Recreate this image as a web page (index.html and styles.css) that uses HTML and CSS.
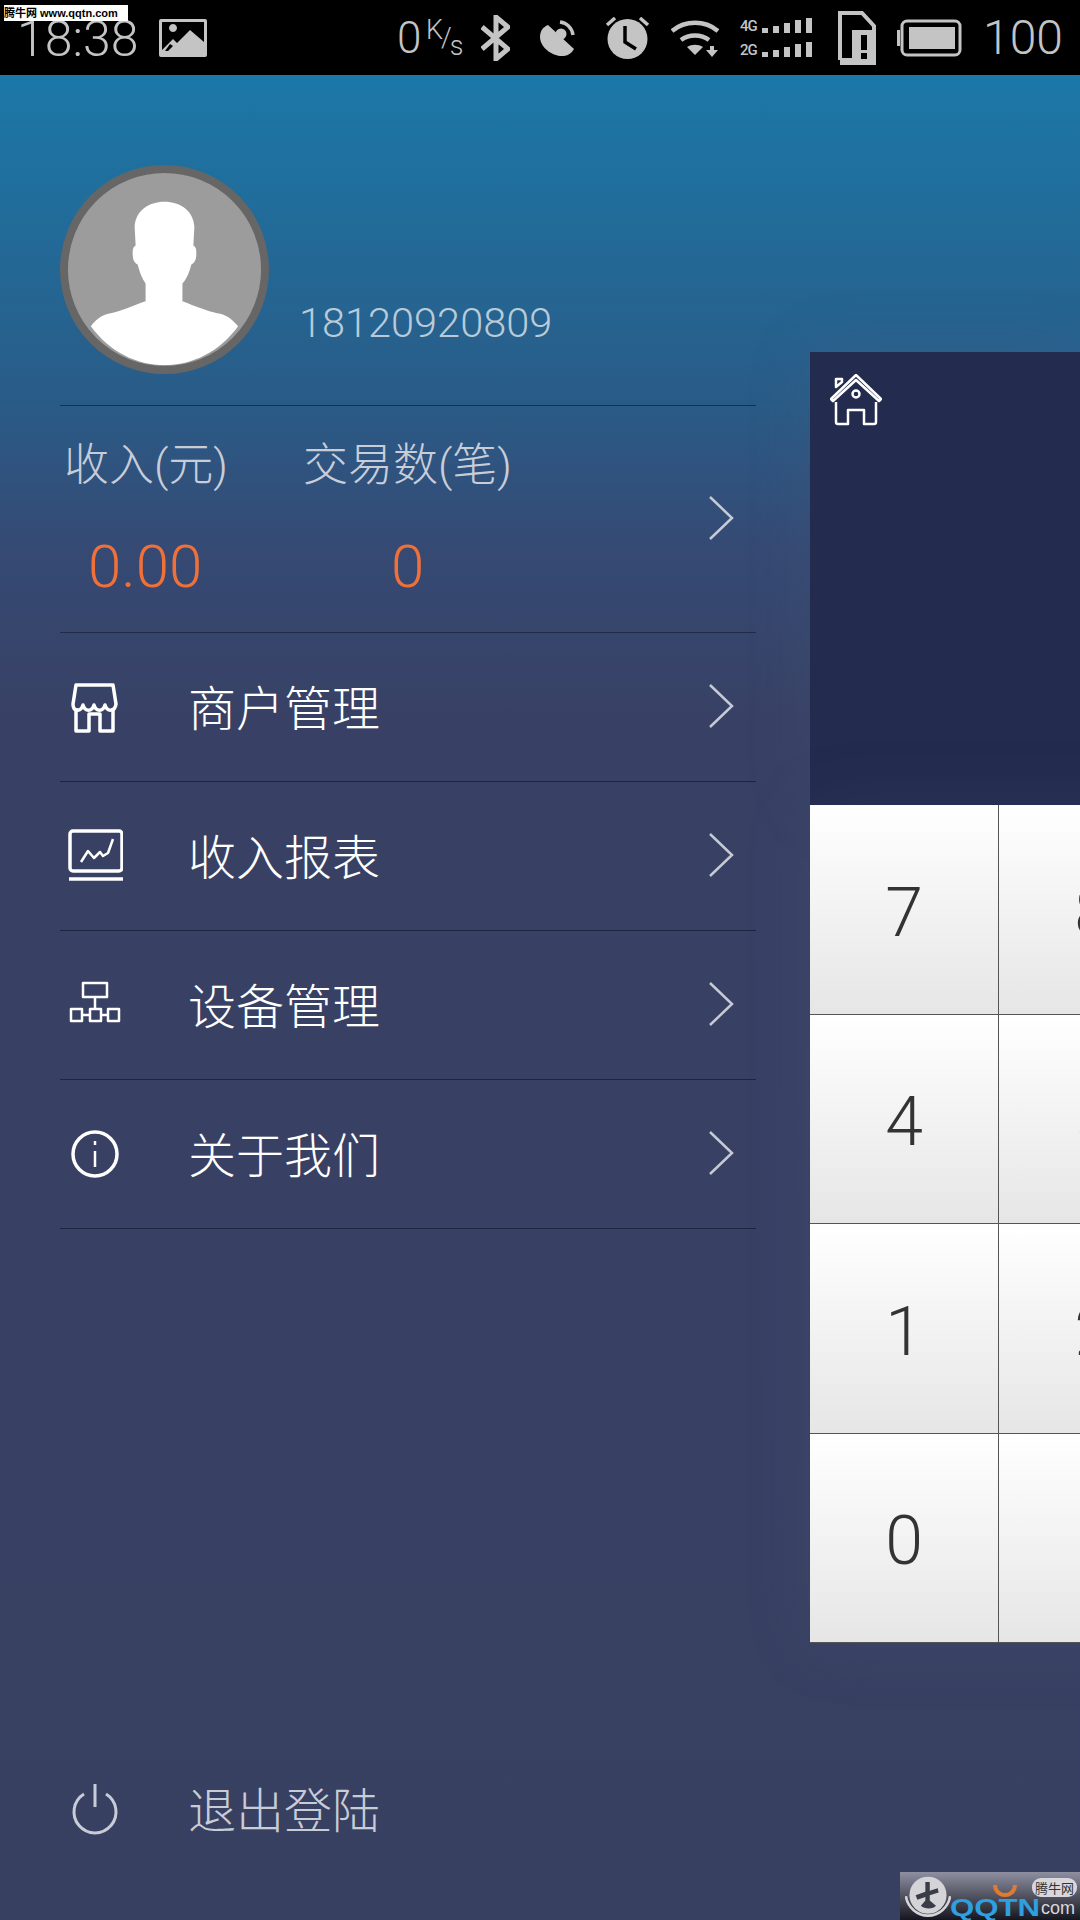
FILE: index.html
```html
<!DOCTYPE html>
<html lang="en">
<head>
    <meta charset="UTF-8">
    <meta name="viewport" content="width=device-width, initial-scale=1.0">
    <title>Drawer</title>
    <link rel="stylesheet" href="styles.css">
</head>
<body>
    <div class="watermark">腾牛网 www.qqtn.com</div>

    <div class="statusbar">
        <span class="time">18:38</span>
        <svg class="st-image" width="48" height="38" viewBox="0 0 48 38"><path fill="#c4c4c4" fill-rule="evenodd" d="M2 0h44a2 2 0 0 1 2 2v34a2 2 0 0 1-2 2H2a2 2 0 0 1-2-2V2a2 2 0 0 1 2-2zM3 3v28l11-11 4 4 13-13 14 12V3zM14 5a4 4 0 1 0 .01 0zM9 32l5-5-3-2-5 7z"/></svg>
        <span class="speed">0</span>
        <span class="speed-unit"><span class="unit-k">K</span><span class="unit-slash">/</span><span class="unit-s">s</span></span>
        <svg class="st-bt" width="29" height="46" viewBox="0 0 29 46"><path fill="none" stroke="#c4c4c4" stroke-width="5" d="M1 12l26 22-12 10V2l12 10L1 34"/></svg>
        <svg class="st-sat" width="35" height="38" viewBox="0 0 35 38"><path fill="#c4c4c4" d="M8 6l26 24a14 14 0 0 1-10 7C12 38 0 28 0 18 0 12 3 8 8 6z"/><path fill="none" stroke="#c4c4c4" stroke-width="3.5" d="M20 3c7 1 12 6 13 13"/><circle cx="21" cy="15" r="5.5" fill="#c4c4c4"/></svg>
        <svg class="st-alarm" width="45" height="42" viewBox="0 0 45 42"><circle cx="22.5" cy="22" r="20" fill="#c4c4c4"/><path fill="none" stroke="#000" stroke-width="3.5" d="M20 9v16l11 7"/><path fill="none" stroke="#c4c4c4" stroke-width="3.5" d="M2 8l8-7M43 8l-8-7"/></svg>
        <svg class="st-wifi" width="48" height="38" viewBox="0 0 48 38"><path fill="none" stroke="#c4c4c4" stroke-width="4.5" d="M1 12c13-11 33-11 46 0M10 21c8-6 20-6 28 0"/><path fill="#c4c4c4" d="M16 28c5-3 11-3 16 0l-8 8z"/><path fill="#c4c4c4" d="M39 27h4v4h4l-6 7-6-7h4z"/></svg>
        <div class="signal">
            <div class="signal-row"><span>4G</span><svg width="52" height="15" viewBox="0 0 52 15"><path fill="#c4c4c4" d="M0 10h6v5H0zM11 8h6v7h-6zM22 5h6v10h-6zM33 2h6v13h-6zM44 0h6v15h-6z"/></svg></div>
            <div class="signal-row"><span>2G</span><svg width="52" height="15" viewBox="0 0 52 15"><path fill="#c4c4c4" d="M0 10h6v5H0zM11 8h6v7h-6zM22 5h6v10h-6zM33 2h6v13h-6zM44 0h6v15h-6z"/></svg></div>
        </div>
        <svg class="st-sim" width="38" height="54" viewBox="0 0 38 54"><path fill="none" stroke="#c4c4c4" stroke-width="4" d="M2 49V2h22l12 13v15"/><path fill="#c4c4c4" fill-rule="evenodd" d="M2 47h12V19h24v35H2zM23 24v15h6V24zM23 42v6h6v-6z"/></svg>
        <svg class="st-batt" width="65" height="38" viewBox="0 0 65 38"><path fill="#c4c4c4" d="M0 11h3v16H0z"/><rect x="5" y="2" width="58" height="34" rx="5" fill="none" stroke="#c4c4c4" stroke-width="3"/><path fill="#c4c4c4" d="M12 8h46v22H12z"/></svg>
        <span class="level">100</span>
    </div>

    <div class="app">
        <div class="drawer">
            <div class="profile">
                <svg class="avatar" width="209" height="209" viewBox="0 0 210 210">
                    <circle cx="105" cy="105" r="101" fill="#9c9c9c" stroke="#666" stroke-width="8"/>
                    <path fill="#fff" d="M31 162C38 153 44 150 51 149C62 147 74 141 86 137V119C82 114 80 107 78 100C74 98 73 94 73 88C73 84 74 82 76 81L75 62C76 46 89 37 105 37C121 37 134 46 135 62L134 81C136 82 137 84 137 88C137 94 136 98 132 100C130 107 128 114 123 119V137C136 142 148 147 158 149C166 150 172 154 179 162C160 188 133 201 105 201C77 201 50 188 31 162Z"/>
                </svg>
                <span class="phone">18120920809</span>
            </div>
            <div class="stats">
                <div class="stat-col stat-income">
                    <span class="stat-label">收入(元)</span>
                    <span class="stat-value">0.00</span>
                </div>
                <div class="stat-col stat-count">
                    <span class="stat-label">交易数(笔)</span>
                    <span class="stat-value">0</span>
                </div>
                <svg class="chevron" width="26" height="44" viewBox="0 0 26 44"><path d="M2 1l22 21L2 43"/></svg>
            </div>
            <div class="menu-row">
                <svg class="menu-icon" width="56" height="56" viewBox="0 0 56 56"><path d="M9 6h37l3 19c-1 8-9 8-11 1-2 7-9 7-11 0-2 7-9 7-11 0-2 7-10 7-10-1z"/><path d="M9 29v23h13V35h11v17h13V29"/></svg>
                <span class="menu-text">商户管理</span>
                <svg class="chevron" width="26" height="44" viewBox="0 0 26 44"><path d="M2 1l22 21L2 43"/></svg>
            </div>
            <div class="menu-row">
                <svg class="menu-icon" width="56" height="56" viewBox="0 0 56 56"><rect x="3" y="3" width="52" height="40" rx="3"/><path stroke-width="2.5" d="M14 34l7-11 6 7 6-6 3 4 5-3 5-14"/><path d="M2 51h54"/></svg>
                <span class="menu-text">收入报表</span>
                <svg class="chevron" width="26" height="44" viewBox="0 0 26 44"><path d="M2 1l22 21L2 43"/></svg>
            </div>
            <div class="menu-row">
                <svg class="menu-icon" width="56" height="56" viewBox="0 0 56 56"><path stroke-width="2.5" d="M16 6h24v14H16zM28 20v12M4 32h11v12H4zM23 32h11v12H23zM41 32h11v12H41zM15 38h8M34 38h7"/></svg>
                <span class="menu-text">设备管理</span>
                <svg class="chevron" width="26" height="44" viewBox="0 0 26 44"><path d="M2 1l22 21L2 43"/></svg>
            </div>
            <div class="menu-row">
                <svg class="menu-icon" width="56" height="56" viewBox="0 0 56 56"><circle cx="28" cy="28" r="22"/><path stroke-width="2.5" d="M28 25v16M28 15v4"/></svg>
                <span class="menu-text">关于我们</span>
                <svg class="chevron" width="26" height="44" viewBox="0 0 26 44"><path d="M2 1l22 21L2 43"/></svg>
            </div>
            <div class="logout">
                <svg class="menu-icon logout-icon" width="56" height="56" viewBox="0 0 56 56"><path d="M17 13a21 21 0 1 0 22 0M28 3v23"/></svg>
                <span class="menu-text logout-text">退出登陆</span>
            </div>
        </div>

        <div class="main">
            <div class="panel">
                <svg class="home-icon" width="52" height="52" viewBox="0 0 52 52">
                    <path d="M1 25L26 1l25 24-2 2L26 6 3 27z"/>
                    <path d="M6 13V5h6v3z"/>
                    <path d="M6 28v20a2 2 0 0 0 2 2h10V36h16v14h10a2 2 0 0 0 2-2V28"/>
                    <circle cx="26" cy="20" r="3.5"/>
                </svg>
            </div>
            <div class="keypad">
                <div class="key">7</div><div class="key">8</div><div class="key">9</div>
                <div class="key">4</div><div class="key">5</div><div class="key">6</div>
                <div class="key">1</div><div class="key">2</div><div class="key">3</div>
                <div class="key">0</div><div class="key"></div><div class="key"></div>
            </div>
        </div>
    </div>

    <div class="brand">
        <svg class="brand-globe" width="46" height="42" viewBox="0 0 52 46"><circle cx="26" cy="21" r="21" fill="#d4d4d8"/><path fill="#3a3c48" d="M23 6h5v10l9-3 1 5-10 3v6l7 6c-3 4-13 4-17 0l5-6v-4l-9 3-2-5 11-4z"/><path fill="none" stroke="#d4d4d8" stroke-width="3" d="M1 22c2 13 13 22 25 22s23-9 25-22"/></svg>
        <span class="brand-horn"></span>
        <span class="brand-bubble">腾牛网</span>
        <span class="brand-name">QQTN</span>
        <span class="brand-com">com</span>
    </div>
</body>
</html>
```

FILE: styles.css
```css
html, body {
    margin: 0;
    padding: 0;
}
body {
    width: 1080px;
    height: 1920px;
    overflow: hidden;
    position: relative;
    background-color: #384062;
    font-family: "Roboto", "Noto Sans CJK SC", sans-serif;
}

/* status bar */
.statusbar {
    height: 75px;
    background-color: #000;
    color: #c4c4c4;
    display: flex;
    align-items: center;
    padding-left: 17px;
    box-sizing: border-box;
    font-weight: 300;
}
.time {
    font-size: 50px;
    font-weight: 300;
    width: 142px;
    padding-top: 2px;
}
.st-image { margin-right: 190px; }
.speed {
    font-size: 44px;
    font-weight: 300;
    width: 29px;
}
.speed-unit {
    width: 55px;
    height: 36px;
    box-sizing: border-box;
    display: flex;
    font-size: 27px;
    font-weight: 300;
    line-height: 20px;
}
.unit-k { align-self: flex-start; }
.unit-slash { align-self: center; margin: 0 -2px; }
.unit-s { align-self: flex-end; }
.st-bt { margin-right: 30px; }
.st-sat { margin-right: 30px; }
.st-alarm { margin-right: 21px; }
.st-wifi { margin-right: 21px; }
.signal {
    width: 74px;
    margin-right: 24px;
    display: flex;
    flex-direction: column;
    gap: 9px;
}
.signal-row {
    display: flex;
    align-items: center;
    height: 15px;
}
.signal-row span {
    font-size: 15px;
    font-weight: 500;
    width: 22px;
    letter-spacing: -1px;
}
.st-sim { margin-right: 21px; }
.st-batt { margin-right: 21px; }
.level {
    font-size: 48px;
    font-weight: 300;
}

/* layout */
.app {
    display: flex;
    height: 1845px;
    overflow: hidden;
    background: linear-gradient(to bottom, #1b78a8 0, #2a5b87 330px, #354a74 470px, #384165 640px, #384062 100%);
}
.drawer {
    width: 810px;
    flex-shrink: 0;
    box-sizing: border-box;
    padding: 0 54px 0 60px;
    display: flex;
    flex-direction: column;
}
.main {
    width: 270px;
    padding-top: 277px;
}

/* profile */
.profile {
    height: 331px;
    box-sizing: border-box;
    padding-top: 90px;
    display: flex;
    align-items: flex-start;
    border-bottom: 1px solid #1f2d4d;
}
.phone {
    margin: 133px 0 0 30px;
    font-size: 41.5px;
    font-weight: 300;
    color: #b9cbd8;
}

/* income */
.stats {
    height: 227px;
    box-sizing: border-box;
    display: flex;
    align-items: flex-start;
    border-bottom: 1px solid #232a45;
}
.stat-col {
    display: flex;
    flex-direction: column;
    padding-top: 29px;
}
.stat-income {
    width: 243px;
    padding-left: 4px;
    box-sizing: border-box;
}
.stat-count {
    flex: 1;
}
.stat-label {
    font-size: 45px;
    line-height: 62px;
    font-weight: 300;
    color: #c8cdd8;
}
.stat-value {
    font-size: 60px;
    font-weight: 300;
    line-height: 70px;
    margin-top: 35px;
    color: #ef7139;
}
.stat-income .stat-value { padding-left: 24px; }
.stat-count .stat-value { padding-left: 88px; }
.stats .chevron {
    align-self: center;
}

.chevron {
    flex-shrink: 0;
    margin: 0 22px 2px auto;
}
.chevron path {
    fill: none;
    stroke: #c6cad4;
    stroke-width: 2.5;
}

/* menu */
.menu-row {
    height: 149.1px;
    box-sizing: border-box;
    display: flex;
    align-items: center;
    border-bottom: 1px solid #1f2540;
}
.menu-icon {
    flex-shrink: 0;
    margin-left: 7px;
    margin-right: 65px;
    fill: none;
    stroke: #fff;
    stroke-width: 3.5;
    stroke-linejoin: round;
}
.menu-text {
    font-size: 48px;
    font-weight: 300;
    color: #fff;
    padding-bottom: 4px;
}
.logout {
    margin-top: auto;
    height: 149px;
    display: flex;
    align-items: center;
    margin-bottom: 37px;
}
.logout-icon {
    stroke: #c8ccd6;
    stroke-width: 3;
}
.logout-text {
    color: #c8ccd6;
}

/* right side */
.panel {
    height: 453px;
    box-sizing: border-box;
    padding: 22px 0 0 20px;
    background-color: #232b4e;
    box-shadow: 0 0 60px rgba(80, 100, 130, 0.2);
}
.home-icon {
    fill: none;
    stroke: #fff;
    stroke-width: 2.5;
    stroke-linejoin: round;
}
.keypad {
    display: grid;
    grid-template-columns: repeat(3, 189px);
    grid-auto-rows: 209.5px;
    width: 567px;
    box-shadow: 0 0 60px rgba(80, 100, 130, 0.2);
}
.key {
    box-sizing: border-box;
    display: flex;
    align-items: center;
    justify-content: center;
    padding-top: 7px;
    border-right: 1px solid #555;
    border-bottom: 1px solid #555;
    background: linear-gradient(to bottom, #fff, #e6e6e6);
    font-size: 68px;
    font-weight: 300;
    color: #333;
}

/* overlays */
.watermark {
    position: absolute;
    left: 4px;
    top: 5px;
    width: 124px;
    height: 16px;
    background-color: #fff;
    color: #000;
    font-family: "Liberation Sans", "Noto Sans CJK SC", sans-serif;
    font-size: 11px;
    font-weight: bold;
    line-height: 16px;
    white-space: nowrap;
    overflow: hidden;
}
.brand {
    position: absolute;
    left: 900px;
    top: 1872px;
    width: 180px;
    height: 48px;
    overflow: hidden;
    background: linear-gradient(to bottom, #8e90a2, #15161f);
}
.brand-globe {
    position: absolute;
    left: 5px;
    top: 4px;
}
.brand-horn {
    position: absolute;
    left: 93px;
    top: 13px;
    width: 16px;
    height: 8px;
    border: 4px solid #e07a30;
    border-top: 0;
    border-radius: 0 0 12px 12px;
}
.brand-bubble {
    position: absolute;
    left: 132px;
    top: 6px;
    padding: 0 3px;
    background-color: #d8d8dc;
    border-radius: 9px;
    color: #333;
    font-family: "Noto Sans CJK SC", sans-serif;
    font-size: 13px;
    line-height: 19px;
}
.brand-name {
    position: absolute;
    left: 50px;
    top: 24px;
    color: #2f9fe0;
    font-family: "Liberation Sans", sans-serif;
    font-weight: bold;
    font-size: 24px;
    line-height: 24px;
    white-space: nowrap;
    transform: scaleX(1.3);
    transform-origin: left center;
}
.brand-com {
    position: absolute;
    left: 141px;
    top: 26px;
    color: #d8d8dc;
    font-family: "Liberation Sans", sans-serif;
    font-size: 18px;
    line-height: 20px;
}
```
